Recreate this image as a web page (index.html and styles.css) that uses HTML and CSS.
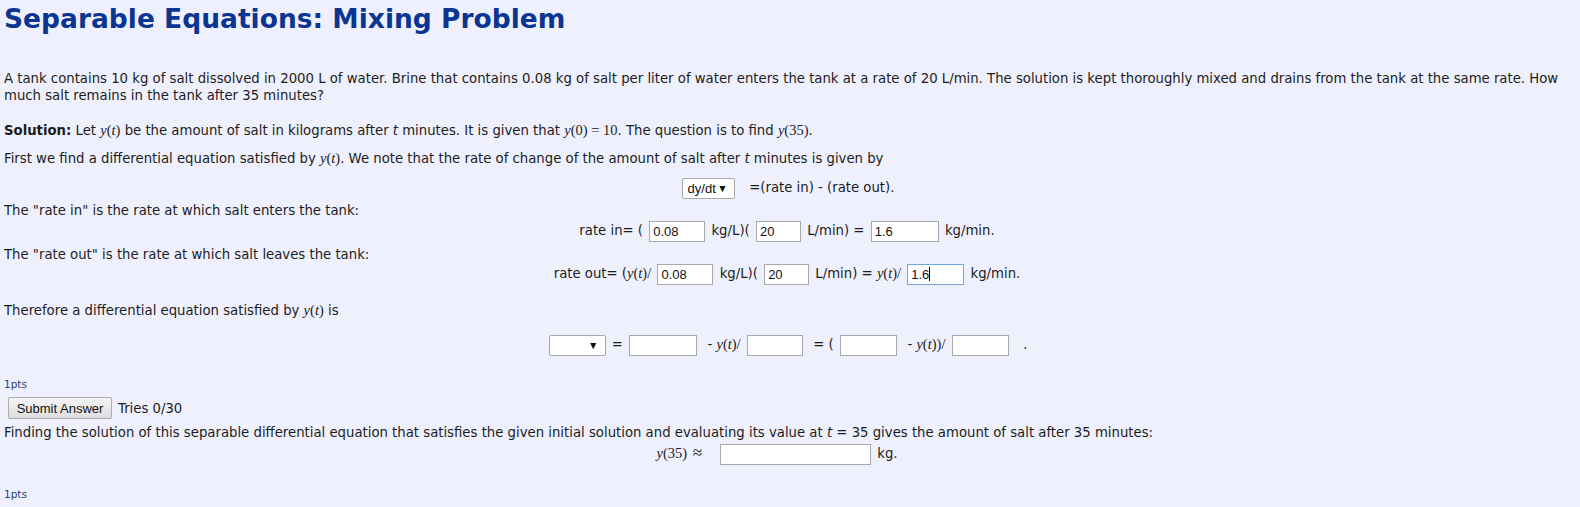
FILE: index.html
```html
<!DOCTYPE html>
<html>
<head>
<meta charset="utf-8">
<link rel="stylesheet" href="styles.css">
</head>
<body>
<div class="page">
  <h1 class="title">Separable Equations: Mixing Problem</h1>

  <p class="txt mt-p1">A tank contains 10 kg of salt dissolved in 2000 L of water. Brine that contains 0.08 kg of salt per liter of water enters the tank at a rate of 20 L/min. The solution is kept thoroughly mixed and drains from the tank at the same rate. How much salt remains in the tank after 35 minutes?</p>

  <p class="txt mt-sol"><b>Solution:</b> Let <span class="m">y</span><span class="mr">(</span><span class="m">t</span><span class="mr">)</span> be the amount of salt in kilograms after <i>t</i> minutes. It is given that <span class="m">y</span><span class="mr">(0) = 10</span>. The question is to find <span class="m">y</span><span class="mr">(35)</span>.</p>

  <p class="txt mt-first">First we find a differential equation satisfied by <span class="m">y</span><span class="mr">(</span><span class="m">t</span><span class="mr">)</span>. We note that the rate of change of the amount of salt after <i>t</i> minutes is given by</p>

  <div class="row mt-dydt"><span class="sel w53">dy/dt<span class="arr">▼</span></span> &nbsp; =(rate in) - (rate out).</div>

  <p class="txt mt-rin">The "rate in" is the rate at which salt enters the tank:</p>

  <div class="row mt-rinrow">rate in= ( <span class="inp w56">0.08</span> kg/L)( <span class="inp w45">20</span> L/min) = <span class="inp w68">1.6</span> kg/min.</div>

  <p class="txt mt-rout">The "rate out" is the rate at which salt leaves the tank:</p>

  <div class="row mt-routrow">rate out= (<span class="m">y</span><span class="mr">(</span><span class="m">t</span><span class="mr">)/</span> <span class="inp w56">0.08</span> kg/L)( <span class="inp w45">20</span> L/min) = <span class="m">y</span><span class="mr">(</span><span class="m">t</span><span class="mr">)/</span> <span class="inp w57 focus">1.6<span class="caret"></span></span> kg/min.</div>

  <p class="txt mt-there">Therefore a differential equation satisfied by <span class="m">y</span><span class="mr">(</span><span class="m">t</span><span class="mr">)</span> is</p>

  <div class="row mt-eq"><span class="sel w57"><span class="arr">▼</span></span> = <span class="inp w68"></span> &nbsp;- <span class="m">y</span><span class="mr">(</span><span class="m">t</span><span class="mr">)/</span> <span class="inp w56"></span> &nbsp;= ( <span class="inp w57"></span> &nbsp;- <span class="m">y</span><span class="mr">(</span><span class="m">t</span><span class="mr">))/</span> <span class="inp w57"></span> &nbsp; .</div>

  <div class="pts mt-pts1">1pts</div>

  <div class="btnrow mt-btn">
    <button class="btn">Submit Answer</button>
    <span>Tries 0/30</span>
  </div>

  <p class="txt mt-find">Finding the solution of this separable differential equation that satisfies the given initial solution and evaluating its value at <i>t</i> = 35 gives the amount of salt after 35 minutes:</p>

  <div class="row mt-y35 shift"><span class="m">y</span><span class="mr">(35) <span class="approx">≈</span></span><span class="inp w150 ml8"></span> kg.</div>

  <div class="pts mt-pts2">1pts</div>
</div>
</body>
</html>
```

FILE: styles.css
```css
html, body {
  margin: 0;
  padding: 0;
  background: #eff0fd;
}
body {
  font-family: "DejaVu Sans", Verdana, sans-serif;
  font-size: 13.25px;
  color: #1c1c1c;
}
.page {
  margin: 0 10px 0 4px;
  display: flex;
  flex-direction: column;
}
.title {
  margin: 3px 0 0 0;
  font-size: 26.5px;
  line-height: 32px;
  font-weight: bold;
  color: #0b3593;
}
.txt {
  margin-bottom: 0;
  line-height: 17px;
}
.txt b { font-weight: bold; }
.m {
  font-family: "Liberation Serif", "Times New Roman", serif;
  font-style: italic;
  font-size: 14.5px;
}
.mr {
  font-family: "Liberation Serif", "Times New Roman", serif;
  font-size: 14.5px;
}
.approx { font-size: 17px; margin-left: 2px; }
.row {
  line-height: 22px;
  height: 22px;
  text-align: center;
  white-space: nowrap;
}
.row.shift { padding-right: 20px; }
.inp, .sel {
  display: inline-block;
  vertical-align: middle;
  box-sizing: border-box;
  height: 21px;
  line-height: 19px;
  background: #fff;
  border: 1px solid #a9a9a9;
  font-family: "Liberation Sans", Arial, sans-serif;
  font-size: 13px;
  color: #111;
  padding-left: 3px;
  margin: 0 2px;
  text-align: left;
}
.ml8 { margin-left: 18px; }
.focus { border-color: #6fa6e4; }
.caret {
  display: inline-block;
  vertical-align: middle;
  width: 1px;
  height: 14px;
  margin-top: -2px;
  background: #000;
}
.sel { border-radius: 2px; position: relative; padding-left: 5px; }
.arr {
  position: absolute;
  right: 6px;
  top: 0;
  font-size: 10.5px;
}
.w45 { width: 45px; }
.w53 { width: 53px; }
.w56 { width: 56px; }
.w57 { width: 57px; }
.w68 { width: 68px; }
.w150 { width: 151px; }
.pts {
  font-size: 10.5px;
  line-height: 14px;
  color: #2b3f6b;
}
.btnrow {
  display: flex;
  align-items: center;
  gap: 6px;
  height: 22px;
  padding-left: 4px;
}
.btn {
  height: 22px;
  width: 104px;
  padding: 0;
  font-family: "Liberation Sans", Arial, sans-serif;
  font-size: 13px;
  color: #111;
  border: 1px solid #acacac;
  border-radius: 2px;
  background: linear-gradient(#f4f4f4, #dddddd);
}
.mt-p1 { margin-top: 35px; }
.mt-sol { margin-top: 18px; }
.mt-first { margin-top: 11px; }
.mt-dydt { margin-top: 10px; }
.mt-rin { margin-top: 3px; }
.mt-rinrow { margin-top: 1px; }
.mt-rout { margin-top: 4px; }
.mt-routrow { margin-top: -1px; }
.mt-there { margin-top: 18px; }
.mt-eq { margin-top: 14px; }
.mt-pts1 { margin-top: 22px; }
.mt-btn { margin-top: 6px; }
.mt-find { margin-top: 5px; }
.mt-y35 { margin-top: 1px; }
.mt-pts2 { margin-top: 23px; }
```
